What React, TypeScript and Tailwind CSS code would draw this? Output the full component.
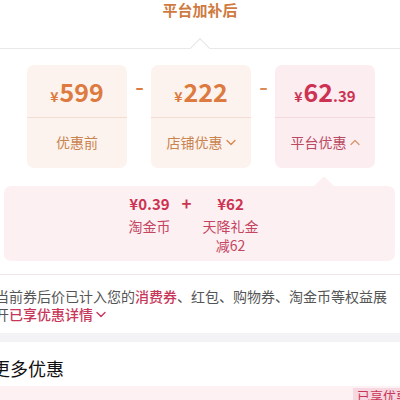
import React from "react";

const Chevron = ({ up = false, color }: { up?: boolean; color: string }) => (
  <svg width="10" height="7" viewBox="0 0 10 7" className="ml-[3px]">
    <path
      d={up ? "M1 5.5 L5 1.5 L9 5.5" : "M1 1.5 L5 5.5 L9 1.5"}
      fill="none"
      stroke={color}
      strokeWidth="1.4"
      strokeLinecap="round"
      strokeLinejoin="round"
    />
  </svg>
);

const Minus = ({ color }: { color: string }) => (
  <div className="w-[24px] flex justify-center pt-[23px]">
    <div className={`w-[7px] h-[2px] rounded-full ${color}`} />
  </div>
);

export default function App() {
  return (
    <div className="w-[400px] h-[400px] overflow-hidden bg-white flex flex-col font-['Noto_Sans_CJK_SC','Noto_Sans',sans-serif]">
      <div className="h-[20px] flex items-center justify-center text-[15px] font-bold leading-[20px] text-[#cf7a41]">
        平台加补后
      </div>
      <div className="relative mt-[28px] h-px bg-[#e9e9e9]">
        <div className="absolute left-[193px] top-[-7px] w-[14px] h-[14px] rotate-45 bg-white border-l border-t border-[#e6e6e6]" />
      </div>

      <div className="mt-[16px] flex pl-[27px]">
        <div className="w-[100px] h-[103px] rounded-[7px] bg-[#fdf3ee] flex flex-col">
          <div className="h-[52px] flex items-baseline justify-center pt-[14px] text-[#dc7a3f] font-bold">
            <span className="text-[14px] leading-none mr-[1px]">¥</span>
            <span className="text-[25px] leading-none">599</span>
          </div>
          <div className="h-px bg-[#f3ddd3]" />
          <div className="flex-1 flex items-center justify-center text-[14px] text-[#c9834f]">优惠前</div>
        </div>
        <Minus color="bg-[#dc7a3f]" />
        <div className="w-[100px] h-[103px] rounded-[7px] bg-[#fdf3ee] flex flex-col">
          <div className="h-[52px] flex items-baseline justify-center pt-[14px] text-[#dc7a3f] font-bold">
            <span className="text-[14px] leading-none mr-[1px]">¥</span>
            <span className="text-[25px] leading-none">222</span>
          </div>
          <div className="h-px bg-[#f3ddd3]" />
          <div className="flex-1 flex items-center justify-center text-[14px] text-[#c9834f]">
            店铺优惠
            <Chevron color="#d9884f" />
          </div>
        </div>
        <Minus color="bg-[#dc8a55]" />
        <div className="w-[100px] h-[103px] rounded-[7px] bg-[#fcedf1] flex flex-col">
          <div className="h-[52px] flex items-baseline justify-center pt-[14px] text-[#cc3352] font-bold">
            <span className="text-[14px] leading-none mr-[1px]">¥</span>
            <span className="text-[25px] leading-none">62</span>
            <span className="text-[15px] leading-none">.39</span>
          </div>
          <div className="h-px bg-[#f2d9e0]" />
          <div className="flex-1 flex items-center justify-center text-[14px] text-[#b94a62]">
            平台优惠
            <Chevron up color="#d89a72" />
          </div>
        </div>
      </div>

      <div className="relative mt-[18px] ml-[4px] w-[391px] h-[77px] rounded-[7px] bg-[#fdf0f3]">
        <div className="absolute left-[313px] top-[-7px] w-[14px] h-[14px] rotate-45 bg-[#fdf0f3] rounded-tl-[2px]" />
        <div className="relative flex justify-center items-start pt-[8px] pr-[12px]">
          <div className="flex flex-col items-center">
            <div className="text-[15px] leading-[20px] font-bold text-[#cc3352]">¥0.39</div>
            <div className="mt-[3px] text-[14px] leading-[19px] text-[#c4455f]">淘金币</div>
          </div>
          <div className="mx-[12px] w-[8px] text-[17px] leading-[18px] font-bold text-[#cc3352] flex justify-center">+</div>
          <div className="flex flex-col items-center">
            <div className="text-[15px] leading-[20px] font-bold text-[#cc3352]">¥62</div>
            <div className="mt-[3px] text-[14px] leading-[19px] text-[#c4455f]">天降礼金</div>
            <div className="text-[14px] leading-[19px] text-[#c4455f]">减62</div>
          </div>
        </div>
      </div>

      <div className="mt-[13px] h-px bg-[#f1e7e9]" />

      <div className="pt-[12px] ml-[-5px] text-[14px] leading-[18px] text-[#555555] whitespace-nowrap">
        当前券后价已计入您的<span className="text-[#c8375a] font-medium">消费券</span>、红包、购物券、淘金币等权益展
        <br />
        <span className="inline-flex items-center">
          开<span className="text-[#c8375a] font-medium">已享优惠详情</span>
          <Chevron color="#c8375a" />
        </span>
      </div>

      <div className="mt-[10px] h-[9px] bg-[#f3f3f5]" />

      <div className="mt-[14px] ml-[-8px] text-[18px] leading-[24px] text-[#111111]">更多优惠</div>

      <div className="mt-[6px] flex-1 bg-[#fdf1f4] flex justify-end items-start">
        <div className="mt-[2px] w-[47px] h-[12px] bg-[#f7d8e1] overflow-hidden pl-[4px] text-[13px] leading-[16px] text-[#c8375a] whitespace-nowrap">
          已享优惠
        </div>
      </div>
    </div>
  );
}
